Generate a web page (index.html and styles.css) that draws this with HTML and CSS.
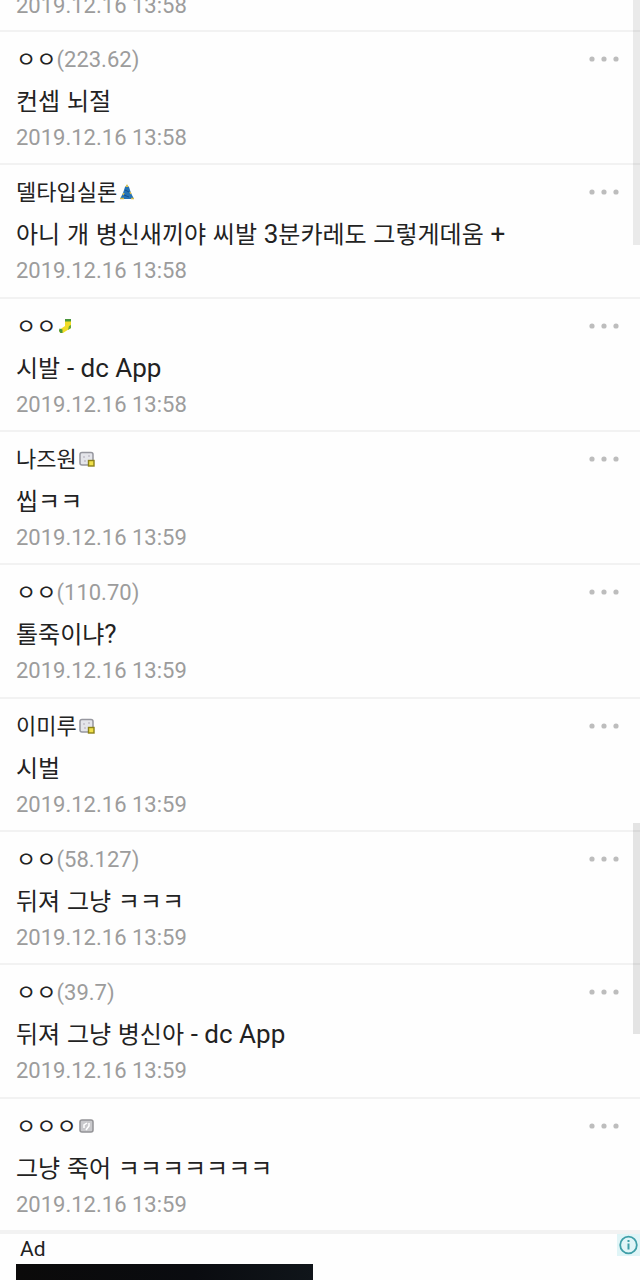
FILE: index.html
```html
<!DOCTYPE html>
<html lang="ko">
<head>
<meta charset="utf-8">
<meta name="viewport" content="width=device-width, initial-scale=1">
<title>댓글</title>
<link rel="stylesheet" href="styles.css">
</head>
<body>
<svg class="defs" aria-hidden="true">
  <symbol id="dots" viewBox="0 0 30 6"><g fill="#bdbdbd"><circle cx="3" cy="3" r="2.6"/><circle cx="15" cy="3" r="2.6"/><circle cx="27" cy="3" r="2.6"/></g></symbol>
  <symbol id="plate" viewBox="0 0 16 16"><rect x="1" y="2" width="13" height="12" rx="2" fill="#c9c9cc" stroke="#939396" stroke-width="1.500"/><path d="M5 10V7l3-2M10 5v3l-3 4" fill="none" stroke="#fff" stroke-width="1.500"/></symbol>
  <symbol id="plate-lock" viewBox="0 0 16 16"><rect x="1" y="1.500" width="13" height="12.500" rx="2" fill="#e4e5ea" stroke="#96979f" stroke-width="1.500"/><path d="M4 6h2M9 5h2M5 10h2" stroke="#b0a9b8" stroke-width="1.200"/><rect x="9.500" y="9.500" width="5.500" height="5.500" fill="#f0e04a" stroke="#8c8119" stroke-width="1.400"/></symbol>
</svg>
<main class="feed">
  <ul class="comments">
    <li class="comment comment-cut"><time class="date">2019.12.16 13:58</time></li>
    <li class="comment">
      <div class="head"><span class="name">ㅇㅇ</span><span class="ip">(223.62)</span><button class="more" aria-label="더보기"><svg><use href="#dots"/></svg></button></div>
      <p class="text">컨셉 뇌절</p><time class="date">2019.12.16 13:58</time>
    </li>
    <li class="comment">
      <div class="head"><span class="name">델타입실론</span><svg class="badge" viewBox="0 0 16 16"><path d="M8 1l2 2 2 6 3 6H1l3-6 2-6z" fill="#2573b5"/><path d="M8 0l1.500 3h-3z" fill="#dec34a"/><path d="M1 14.500h4M12 14.500h3M5 9l-1 2M11 8l1 2" stroke="#d4b84c" stroke-width="1.500"/><path d="M6 6l4 2M5 11l5 2" stroke="#164f8d"/></svg><button class="more" aria-label="더보기"><svg><use href="#dots"/></svg></button></div>
      <p class="text">아니 개 병신새끼야 씨발 <span class="latin">3</span>분카레도 그렇게데움 <span class="latin">+</span></p><time class="date">2019.12.16 13:58</time>
    </li>
    <li class="comment">
      <div class="head"><span class="name">ㅇㅇ</span><svg class="badge" viewBox="0 0 16 16"><path d="M7 1h6v9l-5 3-3 2H2l-1-3 6-4z" fill="#f1dc27"/><path d="M7 1h6v2.500H7zM1.500 10.500l3 1v3.500H2.500l-1.500-2z" fill="#4a963c"/><path d="M11 8l2-1v3l-3 2z" fill="#66a637"/></svg><button class="more" aria-label="더보기"><svg><use href="#dots"/></svg></button></div>
      <p class="text">시발 <span class="latin">- dc App</span></p><time class="date">2019.12.16 13:58</time>
    </li>
    <li class="comment">
      <div class="head"><span class="name">나즈원</span><svg class="badge"><use href="#plate-lock"/></svg><button class="more" aria-label="더보기"><svg><use href="#dots"/></svg></button></div>
      <p class="text">씹ㅋㅋ</p><time class="date">2019.12.16 13:59</time>
    </li>
    <li class="comment">
      <div class="head"><span class="name">ㅇㅇ</span><span class="ip">(110.70)</span><button class="more" aria-label="더보기"><svg><use href="#dots"/></svg></button></div>
      <p class="text">톨죽이냐<span class="latin">?</span></p><time class="date">2019.12.16 13:59</time>
    </li>
    <li class="comment">
      <div class="head"><span class="name">이미루</span><svg class="badge"><use href="#plate-lock"/></svg><button class="more" aria-label="더보기"><svg><use href="#dots"/></svg></button></div>
      <p class="text">시벌</p><time class="date">2019.12.16 13:59</time>
    </li>
    <li class="comment">
      <div class="head"><span class="name">ㅇㅇ</span><span class="ip">(58.127)</span><button class="more" aria-label="더보기"><svg><use href="#dots"/></svg></button></div>
      <p class="text">뒤져 그냥 ㅋㅋㅋ</p><time class="date">2019.12.16 13:59</time>
    </li>
    <li class="comment">
      <div class="head"><span class="name">ㅇㅇ</span><span class="ip">(39.7)</span><button class="more" aria-label="더보기"><svg><use href="#dots"/></svg></button></div>
      <p class="text">뒤져 그냥 병신아 <span class="latin">- dc App</span></p><time class="date">2019.12.16 13:59</time>
    </li>
    <li class="comment">
      <div class="head"><span class="name">ㅇㅇㅇ</span><svg class="badge"><use href="#plate"/></svg><button class="more" aria-label="더보기"><svg><use href="#dots"/></svg></button></div>
      <p class="text">그냥 죽어 ㅋㅋㅋㅋㅋㅋㅋ</p><time class="date">2019.12.16 13:59</time>
    </li>
  </ul>
  <aside class="ad">
    <div class="ad-bar"><span class="ad-label">Ad</span><button class="ad-info" aria-label="광고 정보"><svg viewBox="0 0 22 22"><circle cx="11" cy="11" r="8.300" fill="none" stroke="#3f9fa8" stroke-width="1.800"/><path d="M11 9.500V15.500M11 6v2" stroke="#3f9fa8" stroke-width="2"/></svg></button></div>
    <div class="ad-media"></div>
  </aside>
  <div class="rail rail-top"></div>
  <div class="rail rail-bottom"></div>
</main>
</body>
</html>
```
FILE: styles.css
```css
* { box-sizing: border-box; }
body {
  margin: 0;
  background: #fefefe;
  color: #222;
  font-family: Roboto, "Noto Sans CJK KR", sans-serif;
}
.defs { position: absolute; width: 0; height: 0; }
.feed {
  position: relative;
  height: 100vh;
  overflow: hidden;
}
.comments {
  margin: -9px 0 0;
  padding: 0;
  list-style: none;
}
.comment {
  display: flex;
  flex-direction: column;
  min-height: 133px;
  padding: 13px 20px 0 16px;
  border-bottom: 2px solid #f2f2f2;
}
.comment:nth-child(3n) { min-height: 134px; }
.comment-cut { min-height: 41px; padding-top: 0; }
.comment:last-child { min-height: 135px; border-bottom-width: 4px; }
.head {
  display: flex;
  align-items: center;
  height: 28px;
  font-size: 22px;
}
.name {
  padding-bottom: 4px;
  font-family: "Noto Sans CJK KR", sans-serif;
}
.ip, .date { color: #9c9c9c; }
.badge { width: 16px; height: 16px; margin-left: 2px; }
.more {
  display: flex;
  margin-left: auto;
  padding: 8px 0;
  border: 0;
  background: none;
}
.more svg { width: 32px; height: 6px; }
.text {
  margin: 0;
  padding: 9px 0 5px;
  font-family: "Noto Sans CJK KR", sans-serif;
  font-size: 24px;
  line-height: 36px;
}
.latin {
  font-family: Roboto, sans-serif;
  font-size: 26px;
  line-height: 1;
}
.date {
  font-size: 22px;
  line-height: 30px;
}
.ad-bar {
  display: flex;
  justify-content: space-between;
  align-items: flex-start;
  height: 30px;
  padding-left: 20px;
}
.ad-label { font-size: 21px; line-height: 30px; }
.ad-info {
  display: flex;
  padding: 0;
  border: 0;
  background: #e0f5f7;
}
.ad-info svg { width: 23px; height: 22px; }
.ad-media {
  width: 50%;
  max-width: 297px;
  height: 160px;
  margin-left: 16px;
  background: linear-gradient(90deg, #0b0a0a, #0a0c10 60%, #10151a);
}
.rail {
  position: absolute;
  right: 0;
  width: 7px;
  background: rgba(0, 0, 0, 0.08);
}
.rail-top { top: 0; height: 245px; }
.rail-bottom { top: 823px; height: 211px; background: rgba(0, 0, 0, 0.1); }
```
